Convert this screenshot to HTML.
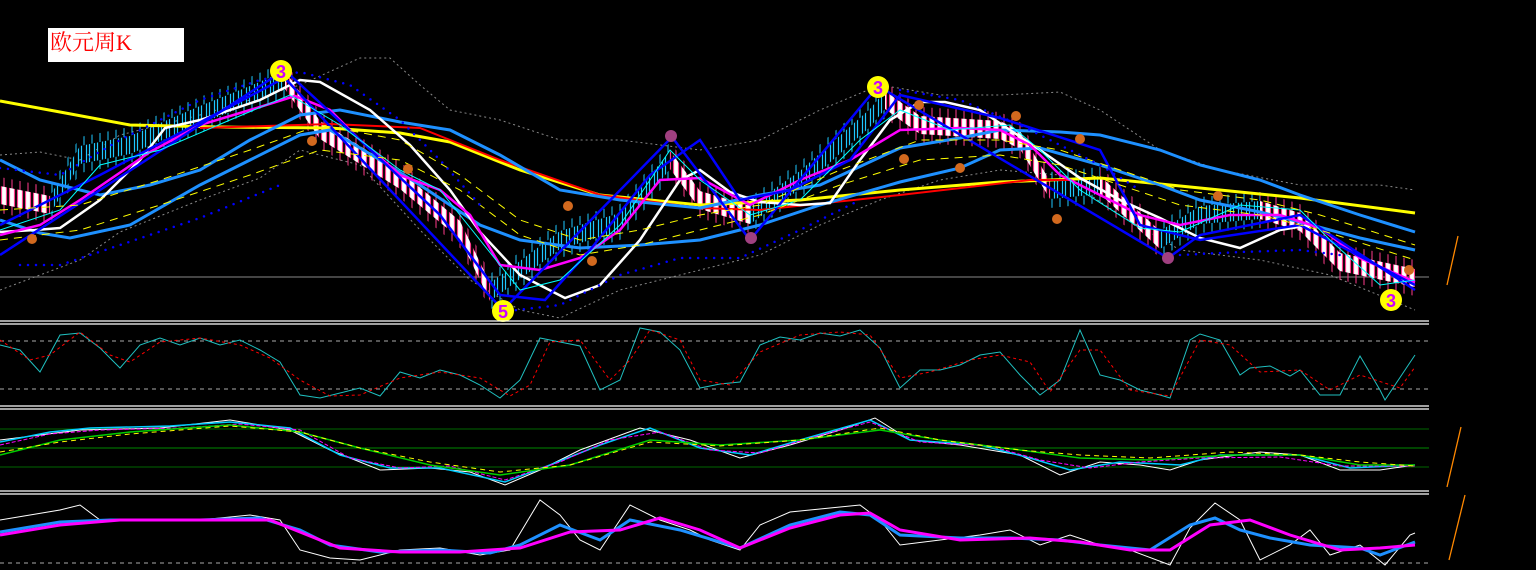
<!DOCTYPE html>
<html><head><meta charset="utf-8"><style>
html,body{margin:0;padding:0;background:#000;width:1536px;height:570px;overflow:hidden}
#t{position:absolute;left:48px;top:28px;width:136px;height:34px;background:#fff;color:#f00;font:22px "Liberation Serif","Noto Serif CJK SC",serif;line-height:30px;padding-left:2px;box-sizing:border-box}
svg{position:absolute;left:0;top:0}
</style></head><body>
<svg width="1536" height="570" xmlns="http://www.w3.org/2000/svg">
<defs>
<pattern id="dn" patternUnits="userSpaceOnUse" x="0" y="0" width="8" height="570"><rect x="1.5" y="-5" width="5" height="580" fill="#fff" stroke="#ff3c8c" stroke-width="1.2"/></pattern>
<pattern id="up" patternUnits="userSpaceOnUse" x="0" y="0" width="8" height="570"><rect x="1.5" y="-5" width="5" height="580" fill="#000" stroke="#1ec8ff" stroke-width="1.2"/></pattern>
<pattern id="wd" patternUnits="userSpaceOnUse" x="0" y="0" width="8" height="570"><rect x="3.5" y="0" width="1" height="570" fill="#ff3c8c"/></pattern>
<pattern id="wu" patternUnits="userSpaceOnUse" x="0" y="0" width="8" height="570"><rect x="3.5" y="0" width="1" height="570" fill="#1ec8ff"/></pattern>
</defs>
<g fill="none">
<polyline stroke="#888" stroke-dasharray="2,3" points="0,155 40,152 80,160 120,135 200,115 300,85 360,58 390,58 420,85 450,110 500,120 560,140 620,140 700,150 760,140 820,110 880,85 940,95 1000,95 1060,92 1100,110 1160,150 1220,170 1300,185 1380,185 1415,190"/>
<polyline stroke="#888" stroke-dasharray="2,3" points="0,290 40,275 80,260 120,232 200,200 260,178 300,150 360,165 420,230 470,280 520,310 560,318 620,290 700,270 760,255 820,225 880,200 940,180 1000,170 1060,175 1120,215 1180,250 1260,260 1330,275 1415,310"/>
<line x1="0" y1="277" x2="1429" y2="277" stroke="#888"/>
</g>
<!-- wicks -->
<g fill="url(#wu)">
<polygon points="50,187 80,137 130,127 200,97 250,77 285,62 285,98 250,113 200,133 130,163 80,173 50,223"/>
<polygon points="490,274 520,252 560,222 620,204 670,142 670,178 620,240 560,258 520,288 490,310"/>
<polygon points="750,197 800,162 870,100 885,82 885,118 870,136 800,198 750,233"/>
<polygon points="1050,172 1100,167 1100,203 1050,208"/>
<polygon points="1160,222 1200,197 1260,192 1260,228 1200,233 1160,258"/>
</g>
<g fill="url(#wd)">
<polygon points="0,177 50,187 50,223 0,213"/>
<polygon points="285,62 320,112 400,162 460,212 490,274 490,310 460,248 400,198 320,148 285,98"/>
<polygon points="670,142 700,182 750,197 750,233 700,218 670,178"/>
<polygon points="885,82 920,107 1000,112 1020,122 1050,172 1050,208 1020,158 1000,148 920,143 885,118"/>
<polygon points="1100,167 1160,222 1160,258 1100,203"/>
<polygon points="1260,192 1300,204 1340,244 1415,260 1415,296 1340,280 1300,240 1260,228"/>
</g>
<!-- bodies -->
<g fill="url(#up)">
<polygon points="50,196 80,146 130,136 200,106 250,86 285,71 285,89 250,104 200,124 130,154 80,164 50,214"/>
<polygon points="490,283 520,261 560,231 620,213 670,151 670,169 620,231 560,249 520,279 490,301"/>
<polygon points="750,206 800,171 870,109 885,91 885,109 870,127 800,189 750,224"/>
<polygon points="1050,181 1100,176 1100,194 1050,199"/>
<polygon points="1160,231 1200,206 1260,201 1260,219 1200,224 1160,249"/>
</g>
<g fill="url(#dn)">
<polygon points="0,186 50,196 50,214 0,204"/>
<polygon points="285,71 320,121 400,171 460,221 490,283 490,301 460,239 400,189 320,139 285,89"/>
<polygon points="670,151 700,191 750,206 750,224 700,209 670,169"/>
<polygon points="885,91 920,116 1000,121 1020,131 1050,181 1050,199 1020,149 1000,139 920,134 885,109"/>
<polygon points="1100,176 1160,231 1160,249 1100,194"/>
<polygon points="1260,201 1300,213 1340,253 1415,269 1415,287 1340,271 1300,231 1260,219"/>
</g>
<g fill="none">
<polyline stroke="#ff0" stroke-width="3" points="0,101 60,112 130,125 220,127 330,128 400,133 450,142 520,170 600,195 700,205 800,200 900,190 1000,182 1100,178 1200,188 1300,198 1415,213"/>
<polyline stroke="#f00" stroke-width="2" points="200,128 330,124 420,128 500,160 600,195 700,208 760,210 900,195 1030,180 1070,180"/>
<polyline stroke="#1e90ff" stroke-width="3" points="0,160 40,180 100,195 150,185 200,170 250,140 300,115 340,110 400,122 450,130 500,155 560,190 620,200 700,208 760,195 820,185 900,148 960,138 1000,130 1060,132 1100,135 1160,150 1200,165 1260,180 1300,195 1360,215 1415,232"/>
<polyline stroke="#1e90ff" stroke-width="3" points="0,220 40,233 70,238 130,225 200,185 250,160 300,135 330,130 380,160 420,185 480,225 520,240 580,248 640,245 700,240 760,225 820,205 900,182 960,168 1000,150 1040,148 1100,165 1160,185 1200,200 1260,212 1300,222 1360,238 1415,250"/>
<polyline stroke="#fff" stroke-width="2.5" points="0,232 35,230 60,228 100,200 140,160 165,128 200,120 260,100 300,80 320,82 370,110 410,145 450,190 480,232 520,275 565,298 600,285 640,240 680,180 700,170 730,192 760,202 800,205 830,203 860,160 890,120 920,102 945,102 980,110 1010,130 1040,150 1080,178 1120,200 1160,218 1200,238 1240,248 1280,230 1310,225"/>
<polyline stroke="#f0f" stroke-width="2.5" points="0,235 40,225 80,200 150,152 200,125 250,110 295,96 330,110 360,140 400,175 440,190 470,215 500,265 540,270 580,258 620,230 660,180 700,178 750,205 800,180 850,160 900,130 960,128 1000,130 1030,145 1060,175 1100,195 1140,215 1180,225 1230,215 1280,215 1320,228 1360,258 1415,282"/>
<polyline stroke="#00f" stroke-width="2.5" points="0,255 280,73 503,310 672,137 750,240 878,86 1168,258 1200,235 1300,215 1415,290"/>
<polyline stroke="#00f" stroke-width="2.5" points="0,225 100,175 290,75 360,140 440,215 500,295 545,300 590,250 650,175 700,140 740,200 790,190 850,160 900,95 1000,118 1100,150 1140,225 1200,240 1300,225 1415,285"/>
<polyline stroke="#0ff" stroke-width="1" points="0,230 60,210 100,165 160,150 230,120 290,95 340,125 400,170 440,190 480,240 520,290 560,280 620,225 670,150 700,180 750,215 800,200 860,140 900,110 950,130 1010,125 1040,150 1080,190 1140,228 1180,232 1240,205 1300,210 1330,240 1380,285 1415,280"/>
<polyline stroke="#ff0" stroke-width="1" stroke-dasharray="8,6" points="0,210 80,205 160,180 250,150 320,125 400,140 460,175 520,220 580,240 640,230 700,215 760,205 840,170 920,140 1000,140 1060,150 1120,170 1180,190 1260,200 1320,215 1415,245"/>
<polyline stroke="#ff0" stroke-width="1" stroke-dasharray="8,6" points="0,240 80,230 160,205 250,175 320,150 400,160 460,190 520,235 580,255 640,245 700,230 760,215 840,185 920,160 1000,155 1060,165 1120,185 1180,205 1260,215 1320,230 1415,260"/>
<!-- SAR dots -->
<polyline stroke="#00f" stroke-width="2.5" stroke-linecap="round" stroke-dasharray="0,8" points="0,168 60,175 120,140 200,100 260,80 300,72 350,85 400,120 440,160 480,205"/>
<polyline stroke="#00f" stroke-width="2.5" stroke-linecap="round" stroke-dasharray="0,8" points="20,265 60,265 120,245 200,218 280,185"/>
<polyline stroke="#00f" stroke-width="2.5" stroke-linecap="round" stroke-dasharray="0,8" points="500,312 560,305 620,275 680,258 740,258 800,230 860,200"/>
<polyline stroke="#00f" stroke-width="2.5" stroke-linecap="round" stroke-dasharray="0,8" points="900,90 960,100 1020,125 1060,145 1100,165 1140,190"/>
<polyline stroke="#00f" stroke-width="2.5" stroke-linecap="round" stroke-dasharray="0,8" points="1180,255 1240,252 1300,250 1340,255"/>
</g>
<g font-family="Liberation Sans,sans-serif" font-weight="bold" text-anchor="middle">
<circle cx="281" cy="71" r="11" fill="#ff0"/><text x="281" y="78" fill="#c0f" font-size="18">3</text>
<circle cx="503" cy="311" r="11" fill="#ff0"/><text x="503" y="318" fill="#c0f" font-size="18">5</text>
<circle cx="878" cy="87" r="11" fill="#ff0"/><text x="878" y="94" fill="#c0f" font-size="18">3</text>
<circle cx="1391" cy="300" r="11" fill="#ff0"/><text x="1391" y="307" fill="#c0f" font-size="18">3</text>
<g fill="#d2691e">
<circle cx="32" cy="239" r="5"/><circle cx="312" cy="141" r="5"/><circle cx="408" cy="169" r="5"/><circle cx="568" cy="206" r="5"/><circle cx="592" cy="261" r="5"/><circle cx="919" cy="105" r="5"/><circle cx="904" cy="159" r="5"/><circle cx="960" cy="168" r="5"/><circle cx="1016" cy="116" r="5"/><circle cx="1080" cy="139" r="5"/><circle cx="1057" cy="219" r="5"/><circle cx="1218" cy="196" r="5"/><circle cx="1409" cy="270" r="5"/>
</g>
<g fill="#a04080"><circle cx="671" cy="136" r="6"/><circle cx="751" cy="238" r="6"/><circle cx="1168" cy="258" r="6"/></g>
</g>
<g stroke="#fff" stroke-width="1.3">
<line x1="0" y1="321" x2="1429" y2="321"/><line x1="0" y1="324" x2="1429" y2="324"/>
<line x1="0" y1="406" x2="1429" y2="406"/><line x1="0" y1="409" x2="1429" y2="409"/>
<line x1="0" y1="491" x2="1429" y2="491"/><line x1="0" y1="494" x2="1429" y2="494"/>
</g>
<g fill="none">
<line x1="0" y1="341" x2="1429" y2="341" stroke="#aaa" stroke-dasharray="4,4"/>
<line x1="0" y1="389" x2="1429" y2="389" stroke="#aaa" stroke-dasharray="4,4"/>
<polyline stroke="#20c0c0" points="0,345 20,350 40,372 60,335 80,333 100,348 120,368 140,345 160,338 180,345 200,338 220,345 240,340 260,350 280,362 300,395 320,398 360,388 380,396 400,372 420,378 440,370 460,375 480,385 500,398 520,380 540,338 560,342 580,346 600,390 620,380 640,328 660,332 680,350 700,388 720,384 740,382 760,345 780,337 800,340 820,333 840,336 860,330 880,348 900,388 920,370 940,370 960,365 980,355 1000,352 1020,375 1040,395 1060,380 1080,330 1100,375 1120,380 1140,390 1160,395 1170,398 1190,340 1200,334 1220,340 1240,375 1250,368 1270,366 1290,376 1300,370 1320,395 1340,395 1360,356 1380,390 1385,400 1415,355"/>
<polyline stroke="#f00" stroke-dasharray="3,3" points="0,340 30,360 50,355 80,332 110,355 130,362 160,342 200,338 240,345 270,358 300,380 330,396 360,395 400,378 440,372 480,378 510,396 530,385 550,342 580,340 610,380 630,360 650,330 680,340 700,380 730,385 760,352 800,335 840,332 870,335 900,378 930,372 970,360 1000,355 1030,362 1050,392 1080,350 1100,350 1130,390 1170,396 1200,340 1230,345 1260,372 1300,370 1330,390 1360,375 1400,388 1415,367"/>
<line x1="0" y1="429" x2="1429" y2="429" stroke="#060"/>
<line x1="0" y1="448" x2="1429" y2="448" stroke="#080"/>
<line x1="0" y1="467" x2="1429" y2="467" stroke="#060"/>
<polyline stroke="#fff" points="0,440 40,435 80,430 160,428 230,420 290,430 330,450 380,470 430,468 470,472 505,485 540,470 580,450 640,428 690,440 740,458 790,445 840,430 875,418 910,440 960,445 1020,455 1060,475 1100,462 1140,465 1170,470 1200,460 1260,452 1300,455 1340,470 1380,470 1415,465"/>
<polyline stroke="#0cf" stroke-width="1.5" points="0,442 50,432 90,428 170,426 230,422 290,428 340,455 390,468 440,468 505,482 550,465 600,445 650,428 700,448 750,455 800,440 870,420 910,440 980,445 1030,458 1070,470 1120,462 1180,465 1220,455 1300,455 1350,468 1415,465"/>
<polyline stroke="#f0f" stroke-dasharray="4,2" points="0,445 50,434 100,430 180,428 240,424 300,430 350,458 400,468 450,466 505,480 560,462 610,440 660,432 710,450 760,453 810,438 870,422 920,442 990,446 1040,460 1090,468 1140,462 1200,458 1280,457 1340,466 1415,466"/>
<polyline stroke="#0c0" stroke-width="1.5" points="0,455 60,440 130,432 230,425 300,432 360,448 430,465 500,475 570,465 650,440 720,445 800,440 880,430 940,440 1020,450 1080,458 1150,460 1230,455 1300,455 1360,465 1415,465"/>
<polyline stroke="#ff0" stroke-dasharray="5,4" points="0,452 60,442 130,434 230,426 300,432 360,448 430,462 500,472 570,465 650,442 720,446 800,440 880,428 940,440 1020,450 1080,455 1150,458 1230,452 1300,455 1360,462 1415,466"/>
<line x1="0" y1="563" x2="1429" y2="563" stroke="#aaa" stroke-dasharray="4,4"/>
<polyline stroke="#fff" points="0,520 30,515 60,510 80,505 100,520 140,520 200,520 250,515 280,520 300,550 330,558 360,560 400,550 440,548 480,555 510,550 540,500 560,515 580,540 600,550 630,505 660,520 690,530 710,540 740,550 760,525 790,512 830,508 860,505 880,520 900,545 940,540 980,535 1010,530 1040,545 1070,535 1100,545 1130,550 1170,565 1190,528 1215,503 1240,520 1260,560 1290,545 1310,530 1330,555 1360,545 1385,565 1410,535 1415,533"/>
<polyline stroke="#1e90ff" stroke-width="3" points="0,532 60,522 110,520 200,520 260,518 300,530 330,545 380,552 440,550 490,553 520,545 560,525 600,540 630,520 680,530 740,548 790,525 840,512 870,515 900,535 960,538 1010,538 1060,540 1100,545 1150,550 1190,525 1215,518 1240,530 1270,538 1310,545 1360,548 1380,555 1415,542"/>
<polyline stroke="#f0f" stroke-width="3" points="0,535 60,525 120,520 200,520 270,520 300,532 340,548 400,552 460,552 520,548 570,532 620,530 660,518 700,530 740,548 790,528 840,515 870,513 900,530 960,540 1030,538 1080,542 1130,550 1170,550 1210,525 1250,520 1290,535 1340,550 1380,548 1415,545"/>
<g stroke="#f80" stroke-width="1.3"><line x1="1447" y1="285" x2="1458" y2="236"/><line x1="1447" y1="487" x2="1461" y2="427"/><line x1="1449" y1="560" x2="1465" y2="495"/></g>
</g>
</svg>
<div id="t">欧元周K</div>
</body></html>
